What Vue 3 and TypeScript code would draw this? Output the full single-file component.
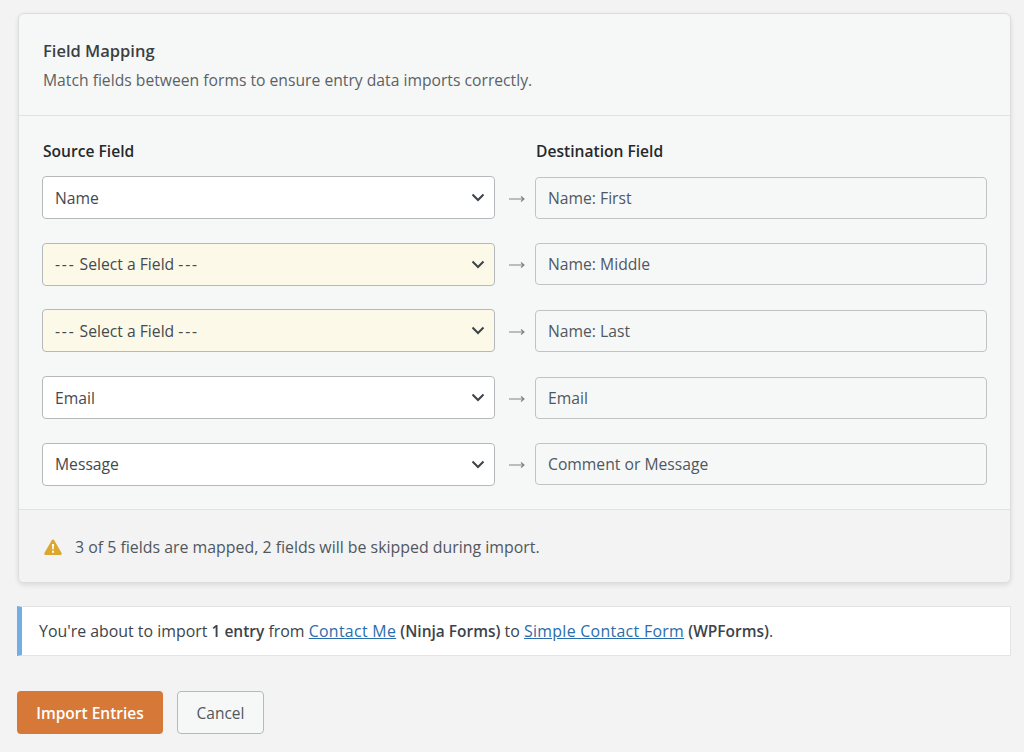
<template>
  <div class="page">
    <section class="card">
      <header class="card-head">
        <h2>Field Mapping</h2>
        <p>Match fields between forms to ensure entry data imports correctly.</p>
      </header>

      <div class="card-body">
        <div class="columns">
          <span class="col-title">Source Field</span>
          <span></span>
          <span class="col-title">Destination Field</span>
        </div>
        <div v-for="row in rows" :key="row.destination" class="map-row">
          <div class="select" :class="{ skipped: row.skipped }">
            <span v-if="row.skipped"><span class="dashes">---</span> {{ row.source }} <span class="dashes">---</span></span>
            <span v-else>{{ row.source }}</span>
            <svg width="14" height="9" viewBox="0 0 14 9">
              <path d="M1.5 1.500 7 7l5.500-5.500" fill="none" stroke="#3c434a" stroke-width="2" />
            </svg>
          </div>
          <svg class="arrow" width="16" height="8" viewBox="0 0 16 8">
            <path d="M0 4h15M12 1.500 15 4l-3 2.500" fill="none" stroke="#7b8186" stroke-width="1.1" />
          </svg>
          <div class="dest">{{ row.destination }}</div>
        </div>
      </div>

      <footer class="card-foot">
        <svg width="18" height="16" viewBox="0 0 18 16">
          <path d="M9 .5c.5 0 .9.3 1.200.8l7.400 12.600c.5.9-.1 2-1.200 2H1.600c-1.100 0-1.700-1.100-1.200-2L7.800 1.300C8.100.8 8.500.5 9 .5z" fill="#dba72f" />
          <path d="M8 5h2l-.3 5.500H8.300zM8 11.700h2v2H8z" fill="#fff" />
        </svg>
        <span>3 of 5 fields are mapped, 2 fields will be skipped during import.</span>
      </footer>
    </section>

    <div class="notice">You're about to import <strong>1 entry</strong> from <a href="#">Contact Me</a> <strong>(Ninja Forms)</strong> to <a href="#">Simple Contact Form</a> <strong>(WPForms)</strong>.</div>

    <div class="actions">
      <button class="primary">Import Entries</button>
      <button class="cancel">Cancel</button>
    </div>
  </div>
</template>

<script setup lang="ts">
interface MapRow {
  source: string;
  destination: string;
  skipped?: boolean;
}

const rows: MapRow[] = [
  { source: "Name", destination: "Name: First" },
  { source: "Select a Field", destination: "Name: Middle", skipped: true },
  { source: "Select a Field", destination: "Name: Last", skipped: true },
  { source: "Email", destination: "Email" },
  { source: "Message", destination: "Comment or Message" },
];
</script>

<style>
html,
body {
  background: #f3f3f3;
}
</style>

<style scoped>
.page {
  box-sizing: border-box;
  width: 1024px;
  height: 752px;
  padding: 13px 13px 0 17px;
  background: #f3f3f3;
  font-family: "Open Sans", "Noto Sans", sans-serif;
  color: #3c434a;
  overflow: hidden;
}

.card {
  margin-left: 1px;
  height: 570px;
  box-sizing: border-box;
  border: 1px solid #dcdede;
  border-radius: 6px;
  background: #f6f8f8;
  box-shadow: 0 2px 5px rgba(0, 0, 0, 0.1);
  display: flex;
  flex-direction: column;
  overflow: hidden;
}

.card-head {
  height: 102px;
  box-sizing: border-box;
  padding: 24px 24px 0;
  border-bottom: 1px solid #e1e3e3;
}

.card-head h2 {
  margin: 0;
  font-size: 16.5px;
  line-height: 26px;
  font-weight: 600;
  color: #3a3f44;
}

.card-head p {
  margin: 6px 0 0;
  font-size: 15.7px;
  line-height: 21px;
  color: #5c6166;
}

.card-body {
  flex: 1;
  padding: 24px 23px 0;
}

.columns,
.map-row {
  display: grid;
  grid-template-columns: 453px 40px 452px;
  align-items: center;
}

.columns {
  height: 22px;
  margin-bottom: 14.45px;
}

.col-title {
  padding-left: 1px;
  font-size: 15.6px;
  font-weight: 600;
  color: #26292c;
}

.map-row {
  height: 43px;
  margin-bottom: 23.65px;
}

.select {
  box-sizing: border-box;
  height: 43px;
  padding: 0 9px 0 12px;
  display: flex;
  align-items: center;
  justify-content: space-between;
  background: #fff;
  border: 1px solid #b6b9bc;
  border-radius: 4px;
  font-size: 15.7px;
  color: #44494e;
}

.select.skipped {
  background: #fcf9e8;
}

.dashes {
  letter-spacing: 1.8px;
}

.arrow {
  margin-left: 14px;
  margin-top: 2px;
}

.dest {
  box-sizing: border-box;
  height: 42px;
  line-height: 40px;
  padding: 0 12px;
  border: 1px solid #c0c3c5;
  border-radius: 4px;
  font-size: 15.7px;
  color: #50575e;
}

.card-foot {
  height: 73px;
  box-sizing: border-box;
  padding: 1px 25px 0;
  display: flex;
  align-items: center;
  gap: 13px;
  background: #f3f3f3;
  border-top: 1px solid #e1e3e3;
  font-size: 15.9px;
  color: #50575e;
}

.notice {
  box-sizing: border-box;
  height: 50px;
  margin-top: 23px;
  padding-left: 17px;
  line-height: 48px;
  background: #fff;
  border: 1px solid #e3e4e5;
  border-left: 5px solid #72aee6;
  font-size: 15.9px;
  color: #3c434a;
}

.notice strong {
  font-size: 15.5px;
  font-weight: 600;
}

.notice a {
  color: #2b6cab;
  letter-spacing: 0.3px;
}

.actions {
  display: flex;
  gap: 14px;
  margin-top: 35px;
}

.actions button {
  box-sizing: border-box;
  height: 43px;
  border-radius: 4px;
  font-family: inherit;
  font-size: 15.5px;
  cursor: pointer;
}

.primary {
  width: 146px;
  border: none;
  background: #d67938;
  color: #fff;
  font-weight: 600;
}

.cancel {
  width: 87px;
  border: 1px solid #b6b9bc;
  background: #f6f7f7;
  color: #50575e;
}
</style>
